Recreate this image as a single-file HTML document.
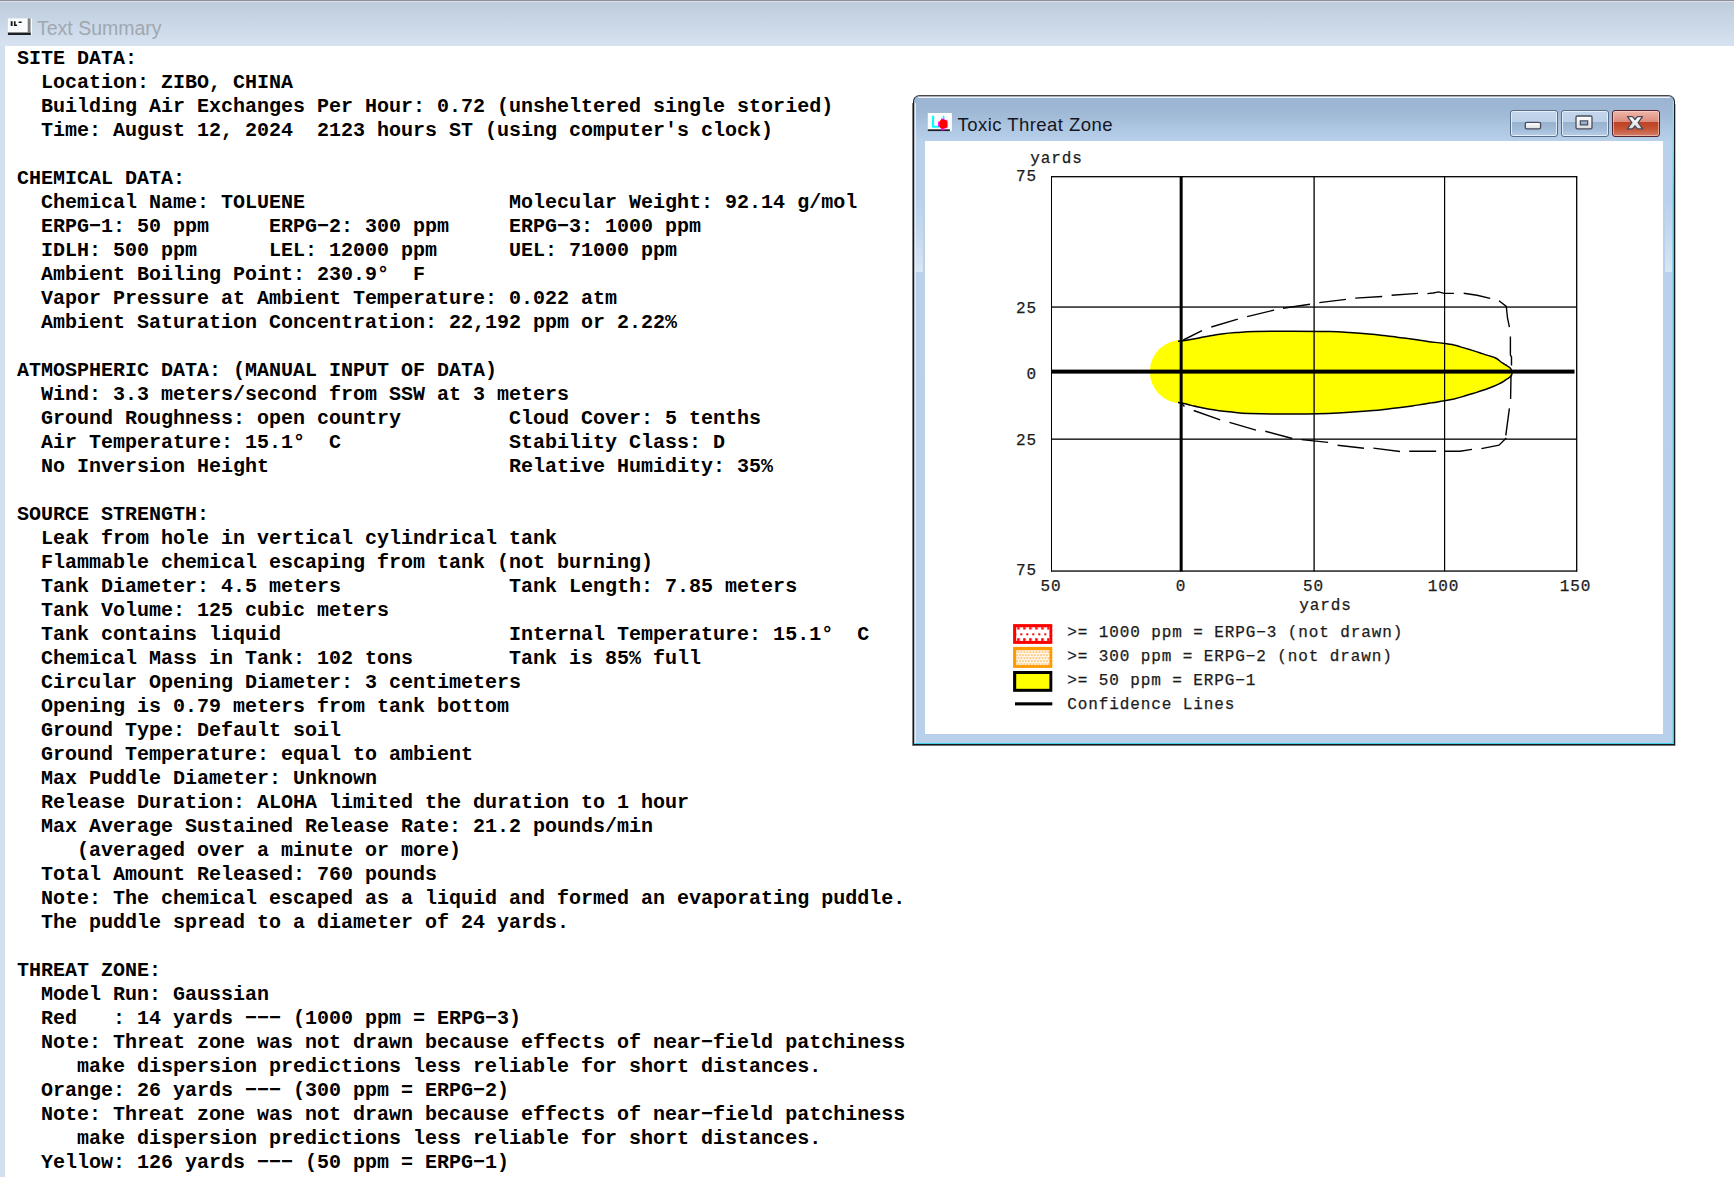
<!DOCTYPE html>
<html>
<head>
<meta charset="utf-8">
<style>
html,body{margin:0;padding:0;}
body{width:1734px;height:1177px;overflow:hidden;background:#fff;position:relative;font-family:"Liberation Sans",sans-serif;}
#tbar{position:absolute;left:0;top:0;width:1734px;height:46px;background:linear-gradient(#bccbdb 0px,#c3d1e0 12px,#d6e2f0 45px);}
#tbar .l0{position:absolute;left:0;top:0;width:100%;height:1px;background:#8e9098;}
#tbar .l1{position:absolute;left:0;top:1px;width:100%;height:1px;background:#dcdfea;}
#lborder{position:absolute;left:0;top:46px;width:5px;height:1132px;background:#d2dfee;}
#ttl{position:absolute;left:37px;top:16px;font-size:19.5px;line-height:24px;color:#a0a7b1;white-space:nowrap;}
#txt{position:absolute;left:17px;top:47px;margin:0;font-family:"Liberation Mono",monospace;font-weight:bold;font-size:20px;line-height:24px;color:#000;white-space:pre;}

#win{position:absolute;left:913px;top:95px;width:762px;height:650px;box-sizing:border-box;border:1px solid #15181c;border-top-color:#474747;border-radius:6.5px 6.5px 0 0;background:linear-gradient(#9ab4d1 0px,#9db7d4 14px,#b9d1eb 46px,#b9d0ea 100%);overflow:hidden;}
#win .hl{position:absolute;left:4px;top:0;right:4px;height:2px;background:linear-gradient(#a9adb3 0,#a9adb3 50%,#edf3fa 50%,#edf3fa 100%);}
#win .cy{position:absolute;right:0;top:5px;bottom:0;width:1px;background:linear-gradient(#a3dcee 0,#7fd8ee 40px,#3bd0ee 90px,#3bd0ee 100%);}
#win .cy2{position:absolute;right:1px;top:8px;bottom:1px;width:1px;background:linear-gradient(rgba(150,225,245,.25) 0,rgba(90,215,240,.5) 90px,rgba(90,215,240,.5) 100%);}
#win .lh{position:absolute;left:0;top:7px;bottom:1px;width:2px;background:linear-gradient(90deg,#7d8690 0,#e8eff8 50%,#e3ecf6 100%);}
#win .rf{position:absolute;top:100px;height:76px;width:7px;background:linear-gradient(rgba(220,232,246,0) 0,rgba(220,232,246,.35) 50%,rgba(222,233,246,.85) 100%);}
.wx{position:absolute;background:rgba(0,0,0,.5);}
#win .cyb{position:absolute;left:0;right:0;bottom:0;height:1px;background:#3fd2ea;}
#wcontent{position:absolute;left:11px;top:45px;width:738px;height:593px;background:#fff;}
#wtitle{position:absolute;left:43.5px;top:17.8px;font-size:18.5px;letter-spacing:0.45px;line-height:22px;color:#15151f;white-space:nowrap;}
.wb{position:absolute;top:14px;width:48px;height:27px;box-sizing:border-box;border:1px solid #586d88;border-radius:3px;box-shadow:inset 0 0 0 1px rgba(235,243,251,.85);background:linear-gradient(#c4d6eb 0,#bcd0e7 43%,#98b2ce 44%,#a3bcd8 75%,#b6cee8 100%);}
.wb.close{border-color:#55222f;box-shadow:inset 0 0 0 1px rgba(255,220,210,.55);background:linear-gradient(#efb6aa 0,#dc8c7b 43%,#bd4127 44%,#c4512f 68%,#d27d67 100%);}
</style>
</head>
<body>
<div id="tbar"><div class="l0"></div><div class="l1"></div></div>
<div id="lborder"></div>
<svg id="ticon" width="40" height="26" viewBox="4 14 40 26" style="position:absolute;left:4px;top:14px">
<rect x="7.9" y="18.4" width="24.1" height="16.6" fill="#fbfcfe"/>
<rect x="27.7" y="18.4" width="2.9" height="14" fill="#7f7f7f"/>
<rect x="7.9" y="32.5" width="22.9" height="2.5" fill="#1d2023"/>
<rect x="10.7" y="21.2" width="1.9" height="4.8" fill="#1a1a1a"/>
<path d="M13.9 21.2 h1.7 v3.2 h1.5 v1.6 h-3.2z" fill="#1a1a1a"/>
<rect x="18.4" y="21.4" width="3.5" height="1.7" rx="0.8" fill="#1a1a1a"/>
</svg>
<div id="ttl">Text Summary</div>
<pre id="txt">SITE DATA:
  Location: ZIBO, CHINA
  Building Air Exchanges Per Hour: 0.72 (unsheltered single storied)
  Time: August 12, 2024  2123 hours ST (using computer's clock)

CHEMICAL DATA:
  Chemical Name: TOLUENE                 Molecular Weight: 92.14 g/mol
  ERPG−1: 50 ppm     ERPG−2: 300 ppm     ERPG−3: 1000 ppm
  IDLH: 500 ppm      LEL: 12000 ppm      UEL: 71000 ppm
  Ambient Boiling Point: 230.9°  F
  Vapor Pressure at Ambient Temperature: 0.022 atm
  Ambient Saturation Concentration: 22,192 ppm or 2.22%

ATMOSPHERIC DATA: (MANUAL INPUT OF DATA)
  Wind: 3.3 meters/second from SSW at 3 meters
  Ground Roughness: open country         Cloud Cover: 5 tenths
  Air Temperature: 15.1°  C              Stability Class: D
  No Inversion Height                    Relative Humidity: 35%

SOURCE STRENGTH:
  Leak from hole in vertical cylindrical tank
  Flammable chemical escaping from tank (not burning)
  Tank Diameter: 4.5 meters              Tank Length: 7.85 meters
  Tank Volume: 125 cubic meters
  Tank contains liquid                   Internal Temperature: 15.1°  C
  Chemical Mass in Tank: 102 tons        Tank is 85% full
  Circular Opening Diameter: 3 centimeters
  Opening is 0.79 meters from tank bottom
  Ground Type: Default soil
  Ground Temperature: equal to ambient
  Max Puddle Diameter: Unknown
  Release Duration: ALOHA limited the duration to 1 hour
  Max Average Sustained Release Rate: 21.2 pounds/min
     (averaged over a minute or more)
  Total Amount Released: 760 pounds
  Note: The chemical escaped as a liquid and formed an evaporating puddle.
  The puddle spread to a diameter of 24 yards.

THREAT ZONE:
  Model Run: Gaussian
  Red   : 14 yards −−− (1000 ppm = ERPG−3)
  Note: Threat zone was not drawn because effects of near−field patchiness
     make dispersion predictions less reliable for short distances.
  Orange: 26 yards −−− (300 ppm = ERPG−2)
  Note: Threat zone was not drawn because effects of near−field patchiness
     make dispersion predictions less reliable for short distances.
  Yellow: 126 yards −−− (50 ppm = ERPG−1)
</pre>

<div class="wx" style="left:912px;top:103px;width:1px;height:643px;"></div>
<div class="wx" style="left:913px;top:745px;width:762px;height:1px;background:rgba(10,20,25,.6);"></div>
<div class="wx" style="left:1675px;top:104px;width:1px;height:642px;background:rgba(0,0,0,.25);"></div>
<div id="win">
 <div class="hl"></div><div class="lh"></div><div class="cy"></div><div class="cy2"></div><div class="cyb"></div><div class="rf" style="left:2px"></div><div class="rf" style="left:750.5px"></div>
 <svg id="wicon" width="40" height="26" viewBox="922 108 40 26" style="position:absolute;left:8px;top:12px">
<rect x="927.8" y="113" width="24.1" height="18.1" fill="#fdfdfe"/>
<rect x="927.8" y="129.3" width="22.1" height="1.8" fill="#1d2023"/>
<path d="M931.9 115.8 h2.2 v9.9 h5.4 v2.1 h-7.6z" fill="#00ffff"/>
<rect x="942.7" y="115.8" width="1.6" height="3.4" fill="#00ffff"/>
<rect x="941" y="118.7" width="3.5" height="11.6" fill="#f0f"/>
<rect x="938.1" y="121.6" width="9.6" height="5" fill="#f0f"/>
<rect x="945" y="119.9" width="2.6" height="8.2" fill="#f6f"/>
<rect x="939.5" y="119.8" width="7.6" height="8.5" rx="2.6" fill="#ff0000"/>
</svg>
 <div id="wtitle">Toxic Threat Zone</div>
 <div class="wb" style="left:596px"></div>
 <div class="wb" style="left:647px"></div>
 <div class="wb close" style="left:698px"></div>
<svg id="wglyph" width="160" height="30" viewBox="1505 108 160 30" style="position:absolute;left:591px;top:12px">
<defs><linearGradient id="gx" x1="0" y1="0" x2="0" y2="1"><stop offset="0" stop-color="#ffffff"/><stop offset="1" stop-color="#dcdde0"/></linearGradient></defs>
<rect x="1525.3" y="122.4" width="15.3" height="6.4" rx="1.6" fill="url(#gx)" stroke="#474c5e" stroke-width="1.3"/>
<path fill-rule="evenodd" d="M1577.3 116 h13.4 a1.3 1.3 0 0 1 1.3 1.3 v10.3 a1.3 1.3 0 0 1 -1.3 1.3 h-13.4 a1.3 1.3 0 0 1 -1.3 -1.3 v-10.3 a1.3 1.3 0 0 1 1.3 -1.3z M1580.4 120.9 v4 h7.2 v-4z" fill="url(#gx)" stroke="#474c5e" stroke-width="1.3"/>
<path d="M1627.5 116.6 h5 l2.5 2.9 l2.5 -2.9 h5 l-4.4 6 l4.6 6.3 h-5.2 l-2.5 -3.1 l-2.5 3.1 h-5.2 l4.6 -6.3z" fill="url(#gx)" stroke="#474a5a" stroke-width="1.3" stroke-linejoin="round"/>
</svg>
 <div id="wcontent">
<svg id="chart" width="738" height="593" viewBox="925 141 738 593" style="position:absolute;left:0;top:0">
<defs>
<pattern id="pr" x="1017.2" y="626.5" width="6" height="11.7" patternUnits="userSpaceOnUse"><rect x="0" y="0" width="2.5" height="3" fill="#f00"/><rect x="3.1" y="6.8" width="2" height="2" fill="#f00"/></pattern>
<pattern id="po" x="1017.6" y="651.4" width="3" height="6" patternUnits="userSpaceOnUse"><rect x="0" y="0" width="1.5" height="1.5" fill="#ff9a10"/><rect x="1.5" y="3" width="1.5" height="1.5" fill="#ff9a10"/></pattern>
</defs>
<circle cx="1181.5" cy="371.7" r="31.7" fill="#ffff00"/>
<path d="M1178.0 341.2C1179.6 341.0 1184.8 340.5 1187.8 340.0C1190.8 339.6 1193.7 339.1 1196.3 338.6C1198.9 338.1 1200.9 337.5 1203.5 337.0C1206.1 336.5 1208.8 336.0 1211.8 335.5C1214.8 335.0 1217.5 334.5 1221.5 334.0C1225.5 333.5 1230.4 333.0 1236.0 332.6C1241.6 332.2 1245.7 331.8 1255.0 331.6C1264.3 331.4 1279.5 331.2 1292.0 331.2C1304.5 331.2 1320.4 331.3 1330.0 331.5C1339.6 331.8 1343.0 332.1 1349.5 332.5C1356.0 332.9 1363.2 333.4 1369.0 333.9C1374.8 334.4 1379.3 335.0 1384.0 335.6C1388.7 336.1 1392.8 336.7 1397.0 337.2C1401.2 337.7 1405.7 338.2 1409.5 338.7C1413.3 339.2 1416.8 339.7 1420.0 340.2C1423.2 340.7 1425.2 341.2 1429.0 341.7C1432.8 342.2 1438.8 342.7 1443.0 343.3C1447.2 343.8 1451.1 344.3 1454.0 345.0C1456.9 345.6 1458.2 346.2 1460.5 346.9C1462.8 347.6 1465.8 348.3 1468.0 349.0C1470.2 349.6 1472.0 350.3 1474.0 350.9C1476.0 351.5 1477.9 352.1 1479.7 352.7C1481.5 353.3 1483.2 354.0 1485.0 354.6C1486.8 355.2 1489.0 355.7 1490.7 356.3C1492.5 356.8 1494.2 357.3 1495.5 358.0C1496.8 358.6 1497.6 359.2 1498.5 359.9C1499.4 360.6 1500.0 361.3 1501.0 362.0C1502.0 362.7 1503.2 363.4 1504.2 364.0C1505.2 364.7 1506.3 365.3 1507.3 366.0C1508.3 366.7 1509.6 367.3 1510.4 368.2C1511.2 369.2 1511.7 371.0 1512.0 371.5 L1512.0 372.5C1511.9 373.0 1511.9 374.6 1511.4 375.5C1510.9 376.4 1509.8 377.1 1508.8 377.9C1507.8 378.6 1506.7 379.2 1505.7 379.9C1504.7 380.6 1503.8 381.3 1502.6 382.0C1501.4 382.7 1500.0 383.4 1498.5 384.1C1497.0 384.8 1495.5 385.5 1493.8 386.2C1492.1 386.9 1490.4 387.5 1488.6 388.2C1486.8 388.9 1485.0 389.6 1483.0 390.3C1481.0 391.0 1478.9 391.7 1476.6 392.4C1474.3 393.1 1471.7 393.8 1469.4 394.5C1467.1 395.2 1465.3 395.9 1462.7 396.6C1460.1 397.4 1457.4 398.2 1454.0 399.0C1450.6 399.7 1446.2 400.4 1442.5 401.1C1438.8 401.7 1435.3 402.2 1432.0 402.8C1428.7 403.3 1426.0 403.8 1422.7 404.3C1419.4 404.8 1416.0 405.4 1412.3 405.9C1408.6 406.4 1404.5 406.9 1400.4 407.4C1396.4 407.9 1392.6 408.5 1388.0 409.0C1383.4 409.5 1378.8 410.1 1373.0 410.6C1367.2 411.1 1360.5 411.6 1353.0 412.1C1345.5 412.6 1339.0 413.1 1328.0 413.5C1317.0 413.8 1300.2 414.1 1287.0 414.1C1273.8 414.2 1258.2 413.8 1249.0 413.5C1239.8 413.2 1237.0 412.6 1232.0 412.1C1227.0 411.7 1223.0 411.2 1219.0 410.7C1215.0 410.2 1211.0 409.6 1208.0 409.1C1205.0 408.6 1203.3 408.1 1201.0 407.6C1198.7 407.1 1196.2 406.6 1194.0 406.1C1191.8 405.6 1190.7 405.1 1188.0 404.5C1185.3 403.9 1179.7 402.9 1178.0 402.6Z" fill="#ffff00"/>
<path d="M1178.0 341.2C1179.6 341.0 1184.8 340.5 1187.8 340.0C1190.8 339.6 1193.7 339.1 1196.3 338.6C1198.9 338.1 1200.9 337.5 1203.5 337.0C1206.1 336.5 1208.8 336.0 1211.8 335.5C1214.8 335.0 1217.5 334.5 1221.5 334.0C1225.5 333.5 1230.4 333.0 1236.0 332.6C1241.6 332.2 1245.7 331.8 1255.0 331.6C1264.3 331.4 1279.5 331.2 1292.0 331.2C1304.5 331.2 1320.4 331.3 1330.0 331.5C1339.6 331.8 1343.0 332.1 1349.5 332.5C1356.0 332.9 1363.2 333.4 1369.0 333.9C1374.8 334.4 1379.3 335.0 1384.0 335.6C1388.7 336.1 1392.8 336.7 1397.0 337.2C1401.2 337.7 1405.7 338.2 1409.5 338.7C1413.3 339.2 1416.8 339.7 1420.0 340.2C1423.2 340.7 1425.2 341.2 1429.0 341.7C1432.8 342.2 1438.8 342.7 1443.0 343.3C1447.2 343.8 1451.1 344.3 1454.0 345.0C1456.9 345.6 1458.2 346.2 1460.5 346.9C1462.8 347.6 1465.8 348.3 1468.0 349.0C1470.2 349.6 1472.0 350.3 1474.0 350.9C1476.0 351.5 1477.9 352.1 1479.7 352.7C1481.5 353.3 1483.2 354.0 1485.0 354.6C1486.8 355.2 1489.0 355.7 1490.7 356.3C1492.5 356.8 1494.2 357.3 1495.5 358.0C1496.8 358.6 1497.6 359.2 1498.5 359.9C1499.4 360.6 1500.0 361.3 1501.0 362.0C1502.0 362.7 1503.2 363.4 1504.2 364.0C1505.2 364.7 1506.3 365.3 1507.3 366.0C1508.3 366.7 1509.6 367.3 1510.4 368.2C1511.2 369.2 1511.7 371.0 1512.0 371.5 M1512.0 372.5C1511.9 373.0 1511.9 374.6 1511.4 375.5C1510.9 376.4 1509.8 377.1 1508.8 377.9C1507.8 378.6 1506.7 379.2 1505.7 379.9C1504.7 380.6 1503.8 381.3 1502.6 382.0C1501.4 382.7 1500.0 383.4 1498.5 384.1C1497.0 384.8 1495.5 385.5 1493.8 386.2C1492.1 386.9 1490.4 387.5 1488.6 388.2C1486.8 388.9 1485.0 389.6 1483.0 390.3C1481.0 391.0 1478.9 391.7 1476.6 392.4C1474.3 393.1 1471.7 393.8 1469.4 394.5C1467.1 395.2 1465.3 395.9 1462.7 396.6C1460.1 397.4 1457.4 398.2 1454.0 399.0C1450.6 399.7 1446.2 400.4 1442.5 401.1C1438.8 401.7 1435.3 402.2 1432.0 402.8C1428.7 403.3 1426.0 403.8 1422.7 404.3C1419.4 404.8 1416.0 405.4 1412.3 405.9C1408.6 406.4 1404.5 406.9 1400.4 407.4C1396.4 407.9 1392.6 408.5 1388.0 409.0C1383.4 409.5 1378.8 410.1 1373.0 410.6C1367.2 411.1 1360.5 411.6 1353.0 412.1C1345.5 412.6 1339.0 413.1 1328.0 413.5C1317.0 413.8 1300.2 414.1 1287.0 414.1C1273.8 414.2 1258.2 413.8 1249.0 413.5C1239.8 413.2 1237.0 412.6 1232.0 412.1C1227.0 411.7 1223.0 411.2 1219.0 410.7C1215.0 410.2 1211.0 409.6 1208.0 409.1C1205.0 408.6 1203.3 408.1 1201.0 407.6C1198.7 407.1 1196.2 406.6 1194.0 406.1C1191.8 405.6 1190.7 405.1 1188.0 404.5C1185.3 403.9 1179.7 402.9 1178.0 402.6" fill="none" stroke="#000" stroke-width="1.5" stroke-linejoin="round"/>
<g fill="#000">
<rect x="1051" y="176.05" width="526.2" height="1.3"/>
<rect x="1051" y="570.4" width="526.2" height="1.3"/>
<rect x="1051" y="176.2" width="1" height="395.3"/>
<rect x="1576.05" y="176.2" width="1.3" height="395.3"/>
<rect x="1313.45" y="176.2" width="1.3" height="395.3"/>
<rect x="1444" y="176.2" width="1.2" height="395.3"/>
<rect x="1051" y="306.4" width="526" height="1.3"/>
<rect x="1051" y="438.5" width="526" height="1.3"/>
<rect x="1179.65" y="176.2" width="3" height="395.3"/>
<rect x="1051" y="369.6" width="523.5" height="4"/>
</g>
<path d="M1183.3 340.0L1202.0 330.6 M1211.3 327.0L1237.8 319.2 M1247.1 316.6L1274.1 310.1 M1283.0 308.3L1310.0 304.2 M1319.3 302.6L1346.0 299.4 M1355.2 298.1L1382.2 296.5 M1391.6 295.2L1418.0 293.4 M1427.4 293.6L1433.0 293.0L1438.8 291.9L1444.0 293.4L1453.9 293.4 M1463.7 293.2L1477.0 295.3L1490.2 298.4 M1499.0 300.7L1506.3 306.4L1507.5 318.0L1509.4 327.2 M1510.4 336.5L1510.4 355.0L1511.5 357.0L1511.5 365.6 M1182.0 404.0L1184.5 406.5 M1193.7 410.5L1220.2 419.8 M1229.5 422.4L1256.0 430.2 M1265.3 431.2L1292.3 438.5 M1301.5 439.6L1328.1 442.4 M1337.6 445.2L1364.0 448.3 M1373.4 448.1L1400.0 451.5 M1409.2 451.3L1436.2 451.3 M1445.0 451.3L1460.0 451.3L1472.0 449.4 M1481.4 448.6L1499.0 445.2L1506.3 438.0 M1505.8 435.4L1509.4 408.4 M1510.6 399.0L1511.0 375.0" fill="none" stroke="#000" stroke-width="1.4"/>
<g font-family="Liberation Mono, monospace" font-size="16" letter-spacing="0.9" fill="#1c1c1c" stroke="#1c1c1c" stroke-width="0.25">
<text x="1030.2" y="162.5" text-anchor="start" xml:space="preserve">yards</text>
<text x="1037.0" y="180.5" text-anchor="end" xml:space="preserve">75</text>
<text x="1037.0" y="312.7" text-anchor="end" xml:space="preserve">25</text>
<text x="1037.0" y="378.7" text-anchor="end" xml:space="preserve">0</text>
<text x="1037.0" y="444.9" text-anchor="end" xml:space="preserve">25</text>
<text x="1037.0" y="575.3" text-anchor="end" xml:space="preserve">75</text>
<text x="1051.0" y="590.5" text-anchor="middle" xml:space="preserve">50</text>
<text x="1181.0" y="590.5" text-anchor="middle" xml:space="preserve">0</text>
<text x="1313.5" y="590.5" text-anchor="middle" xml:space="preserve">50</text>
<text x="1443.5" y="590.5" text-anchor="middle" xml:space="preserve">100</text>
<text x="1575.5" y="590.5" text-anchor="middle" xml:space="preserve">150</text>
<text x="1299.3" y="609.9" text-anchor="start" xml:space="preserve">yards</text>
<text x="1067.2" y="636.8" text-anchor="start" xml:space="preserve">&gt;= 1000 ppm = ERPG−3 (not drawn)</text>
<text x="1067.2" y="660.8" text-anchor="start" xml:space="preserve">&gt;= 300 ppm = ERPG−2 (not drawn)</text>
<text x="1067.2" y="684.6" text-anchor="start" xml:space="preserve">&gt;= 50 ppm = ERPG−1</text>
<text x="1067.2" y="708.6" text-anchor="start" xml:space="preserve">Confidence Lines</text>
</g>
<g>
<rect x="1013.1" y="624.1" width="39.2" height="19.8" fill="#f00"/><rect x="1016.2" y="627.3" width="33.2" height="13.6" fill="#fff"/><rect x="1016.2" y="627.3" width="33.2" height="13.6" fill="url(#pr)"/>
<rect x="1013.1" y="646.9" width="39.2" height="21" fill="#ff9900"/><rect x="1016.2" y="650.2" width="33.2" height="14.9" fill="#fff"/><rect x="1016.2" y="650.2" width="33.2" height="14.9" fill="url(#po)"/>
<rect x="1013.1" y="671" width="39.2" height="20.8" fill="#000"/><rect x="1016.2" y="674" width="33.2" height="14.8" fill="#ff0"/>
<rect x="1015" y="702.3" width="37.3" height="3.1" fill="#000"/>
</g>
</svg>
</div>
</div>
</body>
</html>
